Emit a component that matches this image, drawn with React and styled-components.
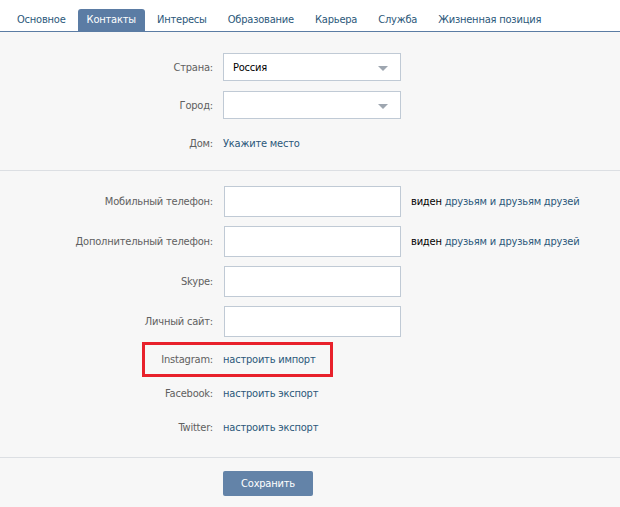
import React from 'react';
import styled, { createGlobalStyle } from 'styled-components';

const GlobalStyle = createGlobalStyle`
  html, body {
    margin: 0;
    padding: 0;
    background: #f7f7f7;
  }
  body {
    font-family: "DejaVu Sans Condensed", "DejaVu Sans", Tahoma, sans-serif;
    font-stretch: condensed;
    font-size: 11px;
    color: #000;
  }
`;

const Page = styled.div`
  width: 620px;
  height: 507px;
  overflow: hidden;
  background: #f7f7f7;
`;

const TabBar = styled.div`
  display: flex;
  align-items: flex-end;
  height: 31px;
  padding-left: 8px;
  background: #fff;
  border-bottom: 1px solid #5b7ca4;
`;

const Tab = styled.div`
  height: 22px;
  line-height: 22px;
  padding: 0 9px;
  margin-right: 3px;
  border-radius: 3px 3px 0 0;
  color: ${({ active }) => (active ? '#fff' : '#2b587a')};
  background: ${({ active }) => (active ? '#5b7ca4' : 'transparent')};
  white-space: nowrap;
  letter-spacing: -0.2px;
`;

const Section = styled.div`
  padding: ${({ pad }) => pad};
  border-bottom: ${({ last }) => (last ? 'none' : '1px solid #dcdfe3')};
  display: flex;
  flex-direction: column;
  gap: ${({ gap }) => gap || '0px'};
`;

const Row = styled.div`
  position: relative;
  display: flex;
  align-items: center;
  height: ${({ h }) => h}px;
`;

const Label = styled.div`
  width: 223px;
  padding-right: 10px;
  box-sizing: border-box;
  text-align: right;
  color: #606060;
  letter-spacing: -0.2px;
  white-space: nowrap;
`;

const Select = styled.div`
  position: relative;
  width: 178px;
  height: 28px;
  box-sizing: border-box;
  border: 1px solid #c0cad5;
  background: #fff;
  display: flex;
  align-items: center;
  padding-left: 9px;
  letter-spacing: -0.2px;

  &::after {
    content: '';
    position: absolute;
    right: 12px;
    top: 12px;
    border-left: 5px solid transparent;
    border-right: 5px solid transparent;
    border-top: 5px solid #9ea6b0;
  }
`;

const Input = styled.div`
  width: 177px;
  height: 31px;
  margin-left: 1px;
  box-sizing: border-box;
  border: 1px solid #c0cad5;
  background: #fff;
`;

const Link = styled.a`
  color: #2b587a;
  text-decoration: none;
  letter-spacing: -0.2px;
  white-space: nowrap;
`;

const Privacy = styled.div`
  margin-left: 10px;
  white-space: nowrap;
  letter-spacing: -0.2px;
  color: #000;
`;

const Highlight = styled.div`
  position: absolute;
  left: 142px;
  top: -4px;
  width: 191px;
  height: 35px;
  box-sizing: border-box;
  border: 3px solid #e8212b;
  pointer-events: none;
`;

const SaveButton = styled.button`
  margin-left: 223px;
  width: 90px;
  height: 25px;
  border: none;
  border-radius: 2px;
  background: #6383a8;
  color: #fff;
  font-family: inherit;
  font-stretch: inherit;
  font-size: 11px;
  letter-spacing: -0.2px;
  cursor: pointer;
`;

const tabs = [
  'Основное',
  'Контакты',
  'Интересы',
  'Образование',
  'Карьера',
  'Служба',
  'Жизненная позиция',
];

const phones = ['Мобильный телефон:', 'Дополнительный телефон:'];

const socials = [
  { name: 'Instagram:', action: 'настроить импорт', marked: true },
  { name: 'Facebook:', action: 'настроить экспорт' },
  { name: 'Twitter:', action: 'настроить экспорт' },
];

export default function App() {
  return (
    <Page>
      <GlobalStyle />
      <TabBar>
        {tabs.map((t) => (
          <Tab key={t} active={t === 'Контакты'}>
            {t}
          </Tab>
        ))}
      </TabBar>

      <Section pad="21px 0 13px" gap="10px">
        <Row h={28}>
          <Label>Страна:</Label>
          <Select>Россия</Select>
        </Row>
        <Row h={28}>
          <Label>Город:</Label>
          <Select />
        </Row>
        <Row h={28}>
          <Label>Дом:</Label>
          <Link href="#">Укажите место</Link>
        </Row>
      </Section>

      <Section pad="15px 0 17px" gap="9px">
        {phones.map((p) => (
          <Row key={p} h={31}>
            <Label>{p}</Label>
            <Input />
            <Privacy>
              виден <Link href="#">друзьям и друзьям друзей</Link>
            </Privacy>
          </Row>
        ))}
        <Row h={31}>
          <Label>Skype:</Label>
          <Input />
        </Row>
        <Row h={31}>
          <Label>Личный сайт:</Label>
          <Input />
        </Row>
        {socials.map((s, i) => (
          <Row key={s.name} h={26} style={i > 0 ? { marginTop: '-1px' } : undefined}>
            <Label>{s.name}</Label>
            <Link href="#">{s.action}</Link>
            {s.marked && <Highlight />}
          </Row>
        ))}
      </Section>

      <Section pad="13px 0 0" last>
        <SaveButton>Сохранить</SaveButton>
      </Section>
    </Page>
  );
}
